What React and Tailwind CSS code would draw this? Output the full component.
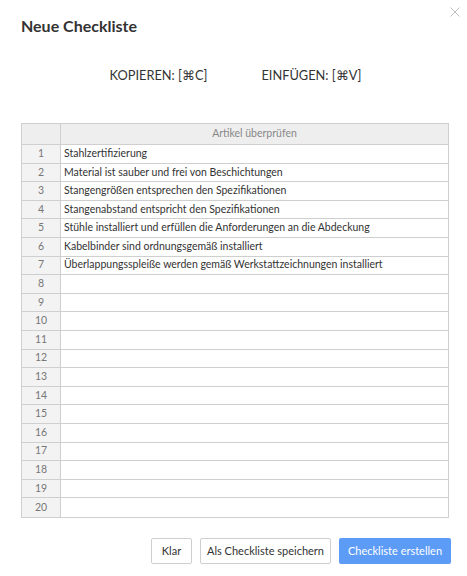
import React from "react";

const items = [
  "Stahlzertifizierung",
  "Material ist sauber und frei von Beschichtungen",
  "Stangengrößen entsprechen den Spezifikationen",
  "Stangenabstand entspricht den Spezifikationen",
  "Stühle installiert und erfüllen die Anforderungen an die Abdeckung",
  "Kabelbinder sind ordnungsgemäß installiert",
  "Überlappungsspleiße werden gemäß Werkstattzeichnungen installiert",
];

export default function App() {
  const rows = Array.from({ length: 20 }, (_, i) => items[i] || "");
  return (
    <div
      className="relative w-[467px] h-[576px] bg-white text-[#333]"
      style={{ fontFamily: "Lato, 'Open Sans', sans-serif" }}
    >
      <svg
        className="absolute left-[450px] top-[7px]"
        width="10"
        height="10"
        viewBox="0 0 10 10"
      >
        <path d="M0.5 0.5 L9.5 9.5 M9.5 0.5 L0.5 9.5" stroke="#bdbdbd" strokeWidth="1" />
      </svg>
      <div className="px-[21px] pt-[16px]">
        <div className="text-[16px] leading-[20px] font-bold text-[#333]">Neue Checkliste</div>
        <div className="mt-[31px] flex justify-center gap-[54px] text-[12.8px] leading-[16px] text-[#333] pl-[4px]">
          <span>KOPIEREN: [⌘C]</span>
          <span>EINFÜGEN: [⌘V]</span>
        </div>
        <div className="mt-[40px] w-[428px] border border-[#cfcfcf] text-[10.5px]">
          <div className="flex h-[21px] border-b border-[#cfcfcf] bg-[#eeeeee]">
            <div className="w-[39px] shrink-0 border-r border-[#cfcfcf]" />
            <div className="flex-1 flex items-center justify-center text-[#888]">Artikel überprüfen</div>
          </div>
          {rows.map((t, i) => (
            <div
              key={i}
              className={`flex h-[18.6px] ${i < 19 ? "border-b border-[#cfcfcf]" : ""}`}
            >
              <div className="w-[39px] shrink-0 border-r border-[#cfcfcf] bg-[#f3f3f3] flex items-center justify-center text-[#777]">
                {i + 1}
              </div>
              <div className="flex-1 flex items-center pl-[3px] text-[#333] whitespace-nowrap overflow-hidden">
                {t}
              </div>
            </div>
          ))}
        </div>
      </div>
      <div className="mt-[20px] flex justify-end gap-[8px] pr-[16px] text-[11px]">
        <button className="h-[26px] w-[41px] border border-[#cfcfcf] rounded-[2px] bg-white text-[#333]">
          Klar
        </button>
        <button className="h-[26px] w-[131px] border border-[#cfcfcf] rounded-[2px] bg-white text-[#333]">
          Als Checkliste speichern
        </button>
        <button className="h-[26px] w-[112px] rounded-[2px] bg-[#5c9bf6] text-white">
          Checkliste erstellen
        </button>
      </div>
    </div>
  );
}
